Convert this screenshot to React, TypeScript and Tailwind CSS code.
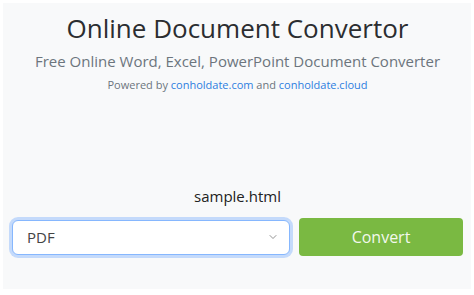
import { ChevronDown } from "lucide-react";

export default function App() {
  return (
    <div className="h-[295px] w-[474px] bg-white p-[3px] pb-[6px] font-['Open_Sans',sans-serif]">
      <div className="flex h-full flex-col items-center bg-[#f8f9fa] pl-[9px] pr-[8px]">
        <h1 className="mt-[8px] text-[26px] leading-[34px] font-normal whitespace-nowrap text-[#2b2d30]">
          Online Document Convertor
        </h1>
        <p className="mt-[4px] text-[15px] leading-[24px] whitespace-nowrap text-[#6c757d]">
          Free Online Word, Excel, PowerPoint Document Converter
        </p>
        <p className="mt-[4px] text-[11px] leading-[16px] whitespace-nowrap text-[#6c757d]">
          Powered by <a className="text-[#2d7ee0]">conholdate.com</a> and{" "}
          <a className="text-[#2d7ee0]">conholdate.cloud</a>
        </p>

        <p className="mt-[92px] text-[15px] leading-[22px] text-[#222]">sample.html</p>

        <div className="mt-[11px] flex w-full items-center gap-[9px]">
          <div className="relative flex h-[35px] flex-1 items-center rounded-[6px] border border-[#86b7fe] bg-white pl-[14px] text-[15px] text-[#444] shadow-[0_0_0_3px_rgba(13,110,253,0.22)]">
            PDF
            <ChevronDown className="absolute right-[10px] h-[12px] w-[12px] text-[#777]" strokeWidth={1.6} />
          </div>
          <button className="h-[38px] w-[164px] rounded-[4px] bg-[#7ab942] text-[16px] text-[#f2f8ec]">
            Convert
          </button>
        </div>
      </div>
    </div>
  );
}
